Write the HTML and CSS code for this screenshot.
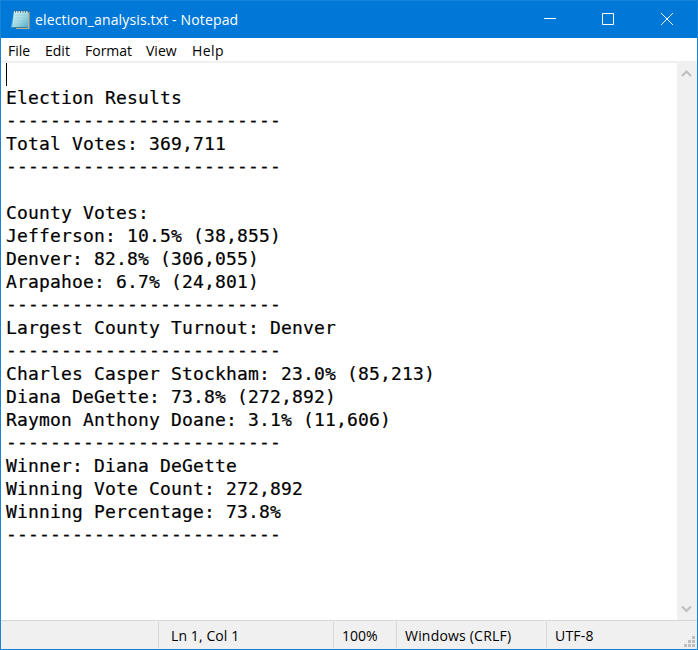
FILE: index.html
```html
<!DOCTYPE html>
<html lang="en">
<head>
<meta charset="utf-8">
<title>election_analysis.txt - Notepad</title>
<link rel="stylesheet" href="styles.css">
</head>
<body>
<div class="window">
  <header class="titlebar">
    <svg class="app-icon" width="22" height="22" viewBox="0 0 22 22">
      <defs><linearGradient id="paper" x1="0" y1="0" x2="1" y2="1"><stop offset="0" stop-color="#d9f0f3"/><stop offset=".5" stop-color="#a5dce6"/><stop offset="1" stop-color="#4eabc5"/></linearGradient></defs>
      <path d="M5 3H19.500V20H6z" fill="#c3b28c"/>
      <path d="M4 2.500L.8 18.500H5z" fill="#61b8dc"/>
      <path d="M4 2H18V18.500H2.500z" fill="url(#paper)"/>
      <path d="M2.500 18.500H18" stroke="#3b7f9c"/>
      <path d="M5 6H17M5 9H17M4.500 12H17M4 15H17" stroke="#8ccbd7" stroke-width=".6"/>
      <path d="M5.500 1V3.500M8 1V3.500M10.500 1V3.500M13 1V3.500M15.500 1V3.500M18 1V3.500" stroke="#456173"/>
    </svg>
    <h1 class="title">election_analysis.txt - Notepad</h1>
    <div class="controls">
      <svg width="58" height="37" viewBox="0 0 58 37"><path d="M13 17.500h12"/></svg>
      <svg width="58" height="37" viewBox="0 0 58 37"><path d="M13.500 12.500h11v11h-11z"/></svg>
      <svg width="58" height="37" viewBox="0 0 58 37"><path d="M14 12l12 12M26 12L14 24"/></svg>
    </div>
  </header>
  <nav class="menu"><span class="m-file">File</span><span class="m-edit">Edit</span><span class="m-format">Format</span><span class="m-view">View</span><span class="m-help">Help</span></nav>
  <main class="editor">
    <div class="document"><div class="first-line"><i class="caret"></i></div><pre>Election Results
<span class="rule">-------------------------</span>
Total Votes: 369,711
<span class="rule">-------------------------</span>

County Votes:
Jefferson: 10.5% (38,855)
Denver: 82.8% (306,055)
Arapahoe: 6.7% (24,801)
<span class="rule">-------------------------</span>
Largest County Turnout: Denver
<span class="rule">-------------------------</span>
Charles Casper Stockham: 23.0% (85,213)
Diana DeGette: 73.8% (272,892)
Raymon Anthony Doane: 3.1% (11,606)
<span class="rule">-------------------------</span>
Winner: Diana DeGette
Winning Vote Count: 272,892
Winning Percentage: 73.8%
<span class="rule">-------------------------</span></pre></div>
    <div class="scrollbar">
      <svg width="20" height="21" viewBox="0 0 20 21"><path d="M5 13L9.500 8.500L14 13"/></svg>
      <svg width="20" height="21" viewBox="0 0 20 21"><path d="M5 7.500L9.500 12L14 7.500"/></svg>
    </div>
  </main>
  <footer class="status">
    <span class="cell blank"></span>
    <span class="cell position">Ln 1, Col 1</span>
    <span class="cell zoom">100%</span>
    <span class="cell ending">Windows (CRLF)</span>
    <span class="cell encoding">UTF-8</span>
    <svg class="grip" width="11" height="11" viewBox="0 0 11 11"><path d="M8 0h3v3H8zM4 4h3v3H4zM8 4h3v3H8zM0 8h3v3H0zM4 8h3v3H4zM8 8h3v3H8z"/></svg>
  </footer>
</div>
</body>
</html>
```
FILE: styles.css
```css
* { box-sizing: border-box; }
body { margin: 0; overflow: hidden; font-family: "Open Sans", "Noto Sans", sans-serif; font-size: 14px; color: #000; }
.window { display: flex; flex-direction: column; width: 698px; height: 650px; background: #fff; border: 1px solid #1883d7; }
.titlebar { display: flex; align-items: center; flex: 0 0 37px; padding-left: 9px; background: #0078d7; color: #fff; }
.app-icon { margin-right: 3px; }
.title { margin: 0; font-size: 14px; font-weight: 400; line-height: 37px; letter-spacing: .15px; white-space: nowrap; }
.controls { display: flex; margin-left: auto; width: 166px; }
.controls svg { flex: none; fill: none; stroke: #fff; stroke-width: 1; }
.menu { display: flex; flex: 0 0 25px; min-height: 0; padding-left: 7px; line-height: 25px; border-bottom: 2px solid #f0f0f0; }
.m-file { width: 37px; }
.m-edit { width: 40px; }
.m-format { width: 61px; }
.m-view { width: 46px; }
.m-help { letter-spacing: .4px; }
.editor { display: flex; flex: 1; min-height: 0; }
.document { flex: 1; padding-left: 5px; }
.first-line { height: 23px; }
.caret { display: block; width: 1px; height: 23px; background: #000; }
pre { margin: 0; font-family: "DejaVu Sans Mono", monospace; font-size: 18px; line-height: 23px; letter-spacing: .163px; -webkit-text-stroke: .2px #000; }
.rule { vertical-align: 1px; line-height: 21px; }
.scrollbar { display: flex; flex-direction: column; justify-content: space-between; width: 20px; background: #f0f0f0; }
.scrollbar svg { fill: none; stroke: #bfbfbf; stroke-width: 2.2; }
.status { display: flex; flex: 0 0 29px; min-height: 0; position: relative; padding: 1px 0; background: #f0f0f0; border-top: 1px solid #d7d7d7; line-height: 27px; white-space: nowrap; }
.cell { border-right: 1px solid #d7d7d7; }
.blank { width: 158px; }
.position { width: 175px; padding-left: 12px; letter-spacing: .1px; }
.zoom { width: 63px; padding-left: 8px; }
.ending { width: 150px; padding-left: 8px; letter-spacing: .2px; }
.encoding { padding-left: 8px; border: 0; letter-spacing: .2px; }
.grip { position: absolute; right: 2px; bottom: 2px; fill: #bfbfbf; }
```
